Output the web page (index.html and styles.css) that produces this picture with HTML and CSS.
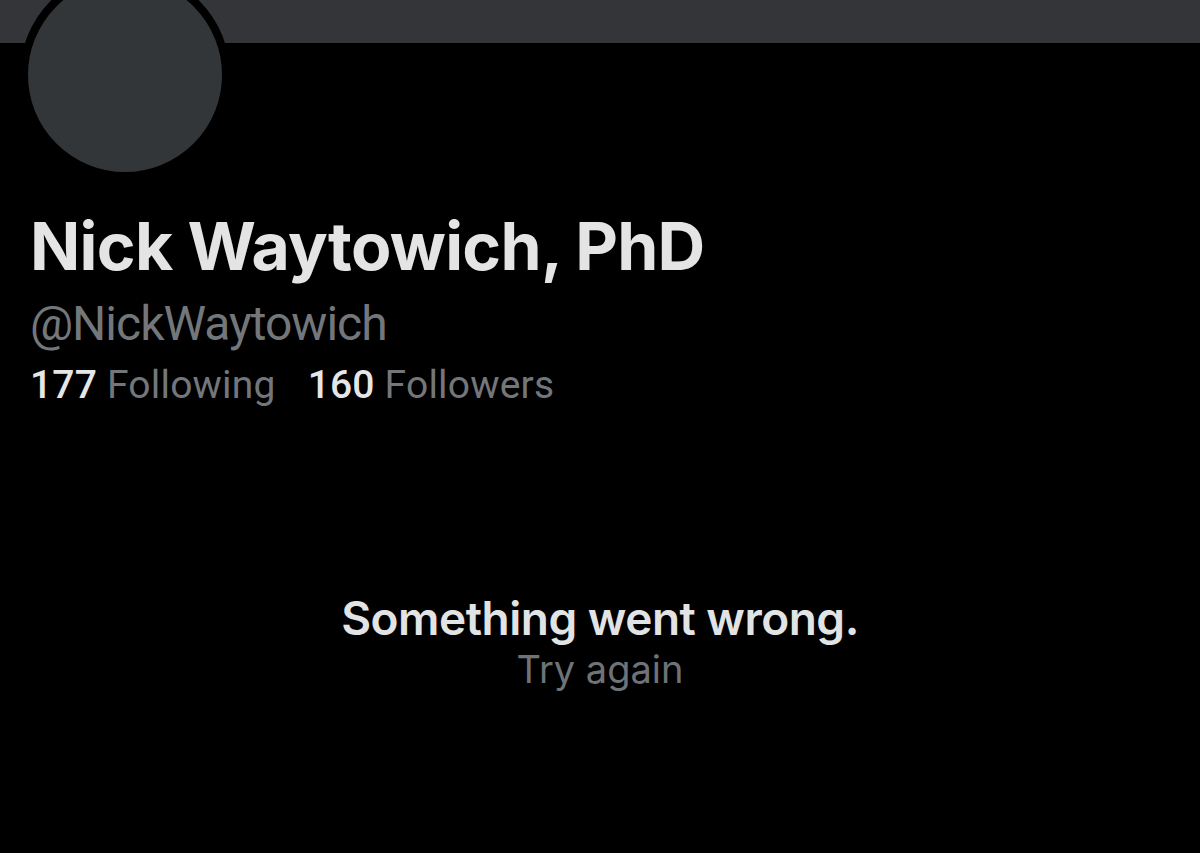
FILE: index.html
```html
<!DOCTYPE html>
<html lang="en">
<head>
    <meta charset="UTF-8">
    <meta name="viewport" content="width=device-width, initial-scale=1.0">
    <title>Nick Waytowich, PhD (@NickWaytowich)</title>
    <link rel="stylesheet" href="styles.css">
</head>
<body>
    <div class="banner"></div>

    <div class="profile">
        <div class="avatar"></div>
        <h1 class="name">Nick Waytowich, PhD</h1>
        <p class="handle">@NickWaytowich</p>
        <div class="stats">
            <span class="stat"><b>177</b> Following</span>
            <span class="stat"><b>160</b> Followers</span>
        </div>
    </div>

    <div class="error">
        <p class="error-title">Something went wrong.</p>
        <p class="error-retry">Try again</p>
    </div>
</body>
</html>
```

FILE: styles.css
```css
/* Basic Reset & Body Styling */
body {
    margin: 0;
    padding: 0;
    background-color: #000;
    color: #e2e3e4;
    font-family: 'Inter', 'Liberation Sans', sans-serif;
    min-height: 100vh;
    overflow: hidden;
}

/* Header banner */
.banner {
    height: 43px;
    background-color: #333538;
}

/* Profile block */
.profile {
    display: flow-root; /* keep the avatar's negative margin inside */
    padding: 0 30px;
}

.avatar {
    width: 194px;
    height: 194px;
    margin-top: -73px;
    margin-left: -10px;
    border-radius: 50%;
    background-color: #333639;
    border: 8px solid #000;
}

.name {
    margin: 31px 0 0;
    font-size: 66px;
    font-weight: 700;
    letter-spacing: -0.7px;
    line-height: 70px;
    color: #e4e4e4;
}

.handle {
    margin: 15px 0 0;
    font-family: 'Roboto', 'Liberation Sans', sans-serif;
    font-size: 48px;
    font-weight: 400;
    line-height: 56px;
    letter-spacing: -1px;
    color: #73777b;
}

.stats {
    display: flex;
    gap: 32px;
    margin-top: 8px;
    font-family: 'Roboto', 'Liberation Sans', sans-serif;
    font-size: 39px;
    line-height: 50px;
    letter-spacing: 0.2px;
    color: #73777b;
}

.stat b {
    color: #e6e6e6;
    font-weight: 500;
}

/* Error message */
.error {
    margin-top: 181px;
    text-align: center;
}

.error-title {
    margin: 0;
    font-size: 46px;
    font-weight: 600;
    line-height: 54px;
    letter-spacing: -0.5px;
    color: #e2e3e4;
}

.error-retry {
    margin: 0;
    font-size: 38px;
    line-height: 48px;
    color: #6f7377;
}
```
